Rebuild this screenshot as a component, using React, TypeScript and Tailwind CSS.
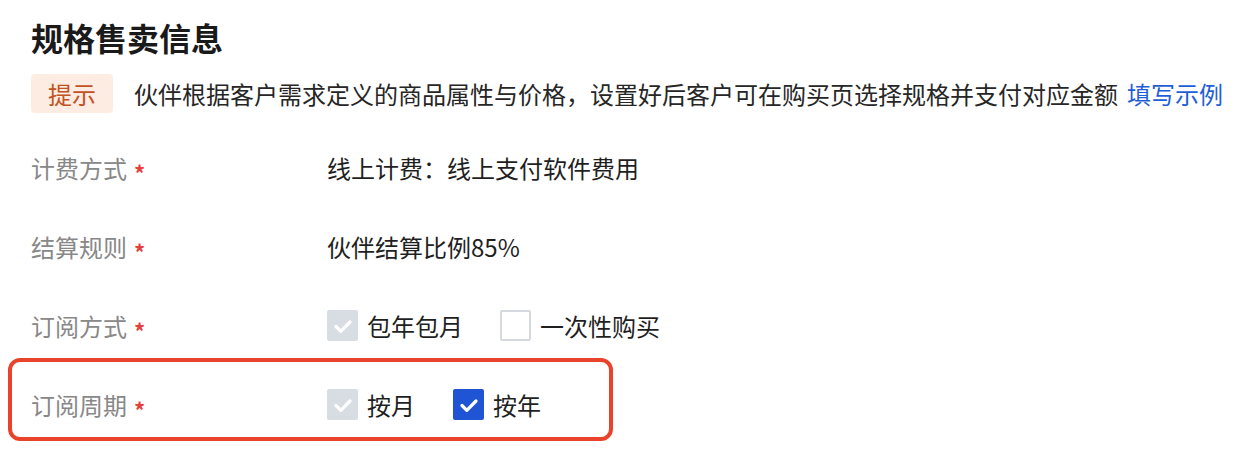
import React from "react";

const FONT = '"PingFang SC", "Noto Sans CJK SC", "Noto Sans", sans-serif';

function Check({ state }: { state: "disabled" | "checked" | "empty" }) {
  if (state === "empty") {
    return <span className="h-[31px] w-[31px] shrink-0 rounded-[2px] border-2 border-[#d5d9df] bg-white" />;
  }
  return (
    <span
      className={`flex h-[31px] w-[31px] shrink-0 items-center justify-center rounded-[2px] ${
        state === "checked" ? "bg-[#1f55d4]" : "bg-[#d8dce3]"
      }`}
    >
      <svg width="22" height="22" viewBox="0 0 22 22" fill="none">
        <path d="M4 11.5l4.8 4.8L18 7" stroke="white" strokeWidth="3.2" strokeLinecap="round" strokeLinejoin="round" />
      </svg>
    </span>
  );
}

function Option({ state, label }: { state: "disabled" | "checked" | "empty"; label: string }) {
  return (
    <label className="flex items-center gap-[9px]">
      <Check state={state} />
      <span className="text-[24px] leading-[32px] text-[#1f1f1f]">{label}</span>
    </label>
  );
}

function Row({ label, children }: { label: string; children: React.ReactNode }) {
  return (
    <div className="flex h-[79px] items-center">
      <div className="flex w-[296px] shrink-0 items-center text-[24px] leading-[32px] text-[#888888]">
        {label}
        <span className="ml-[7px] mt-[8px] text-[22px] font-bold leading-none text-[#e5403a]">*</span>
      </div>
      <div className="flex items-center">{children}</div>
    </div>
  );
}

export default function App() {
  return (
    <div className="h-[450px] w-[1238px] overflow-hidden bg-white pl-[31px]" style={{ fontFamily: FONT }}>
      <h2 className="pt-[17px] text-[32px] font-bold leading-[40px] text-[#1a1a1a]">规格售卖信息</h2>

      <div className="mt-[17px] flex items-center">
        <span className="flex h-[39px] items-center rounded-[4px] bg-[#fcece1] px-[17px] text-[24px] text-[#c2521f]">
          提示
        </span>
        <span className="ml-[21px] text-[24px] leading-[32px] text-[#262626]">
          伙伴根据客户需求定义的商品属性与价格，设置好后客户可在购买页选择规格并支付对应金额
        </span>
        <a className="ml-[9px] text-[24px] leading-[32px] text-[#1f5ed6]">填写示例</a>
      </div>

      <div className="mt-[15px]">
        <Row label="计费方式">
          <span className="text-[24px] leading-[32px] text-[#1f1f1f]">线上计费：线上支付软件费用</span>
        </Row>
        <Row label="结算规则">
          <span className="text-[24px] leading-[32px] text-[#1f1f1f]">伙伴结算比例85%</span>
        </Row>
        <Row label="订阅方式">
          <div className="flex items-center gap-[37px]">
            <Option state="disabled" label="包年包月" />
            <Option state="empty" label="一次性购买" />
          </div>
        </Row>
        <div className="relative">
          <Row label="订阅周期">
            <div className="flex items-center gap-[38px]">
              <Option state="disabled" label="按月" />
              <Option state="checked" label="按年" />
            </div>
          </Row>
          <div className="pointer-events-none absolute left-[-23px] top-[-7px] h-[83px] w-[605px] rounded-[12px] border-[4.5px] border-[#e9432b]" />
        </div>
      </div>
    </div>
  );
}
